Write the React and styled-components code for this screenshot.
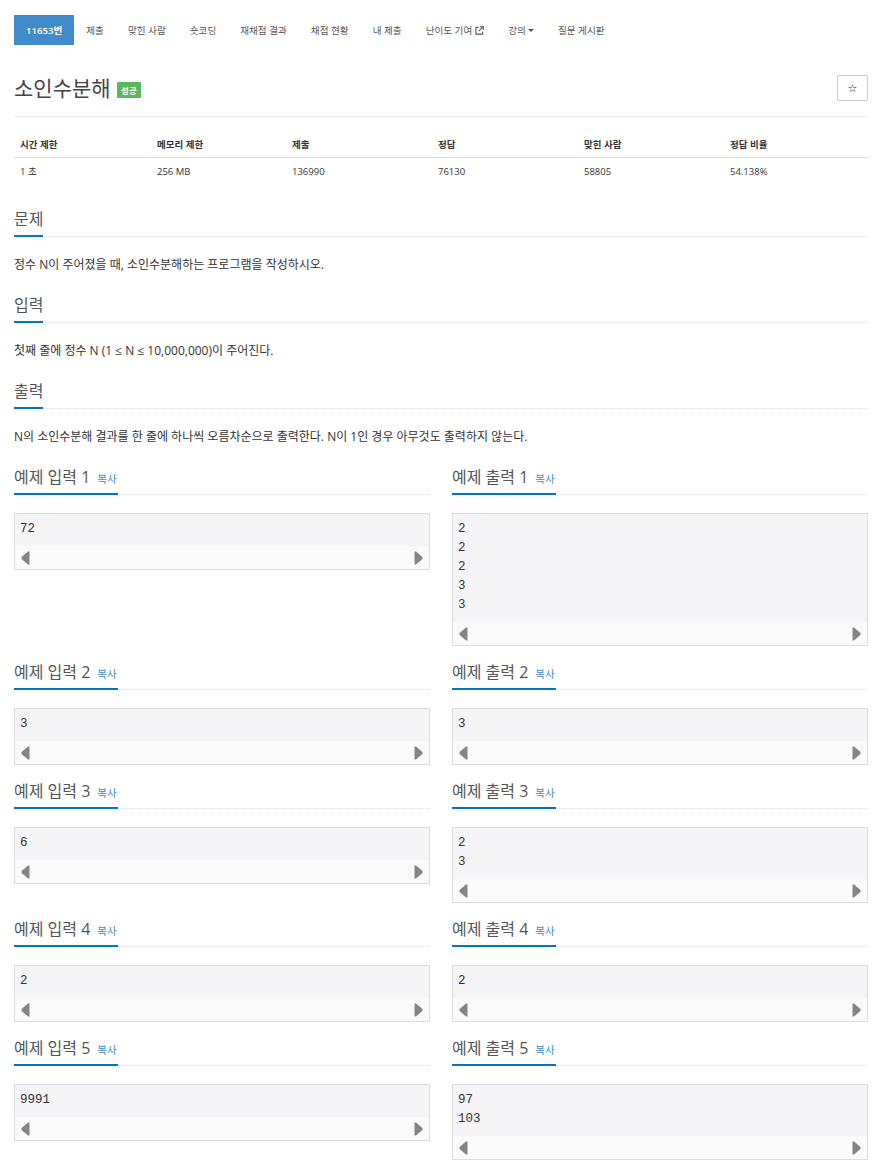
import React from 'react';
import styled, { createGlobalStyle } from 'styled-components';

const GlobalStyle = createGlobalStyle`
  body {
    margin: 0;
    background: #fff;
    color: #333;
    font-family: "Open Sans", "Noto Sans CJK KR", sans-serif;
  }
`

const Page = styled.div`
  width: 854px;
  padding: 15px 0 20px 14px;
`

const Nav = styled.ul`
  display: flex;
  margin: 0;
  padding: 0;
  list-style: none;
`

const NavItem = styled.li`
  display: flex;
  align-items: center;
  gap: 3px;
  height: 30px;
  padding: 0 12px;
  font-size: 9.6px;
  color: ${p => (p.active ? '#fff' : '#555')};
  background: ${p => (p.active ? '#428bca' : 'transparent')};
  font-weight: ${p => (p.active ? 600 : 400)};
`

const Caret = styled.span`
  display: inline-block;
  width: 0;
  height: 0;
  margin-left: -1px;
  border-top: 3.5px solid #555;
  border-left: 3px solid transparent;
  border-right: 3px solid transparent;
`

const TitleRow = styled.div`
  display: flex;
  align-items: center;
  height: 30px;
  margin-top: 28px;
  padding-bottom: 13px;
  border-bottom: 1px solid #eee;
`

const Title = styled.h1`
  margin: 0;
  font-size: 21px;
  font-weight: 400;
  color: #444;
  line-height: 30px;
`

const Badge = styled.span`
  display: inline-flex;
  align-items: center;
  height: 16px;
  padding: 0 4.5px;
  margin: 4px 0 0 6px;
  background: #5cb85c;
  color: #fff;
  font-size: 8.5px;
  font-weight: 700;
  border-radius: 1px;
`

const StarButton = styled.button`
  margin-left: auto;
  width: 31px;
  height: 26px;
  padding: 0;
  background: #fff;
  border: 1px solid #ccc;
  border-radius: 2px;
  font-size: 11px;
  color: #222;
  font-family: "DejaVu Sans", sans-serif;
`

const Table = styled.div`
  display: grid;
  grid-template-columns: 137px 135px 146px 146px 146px 1fr;
  margin-top: 14px;
  font-size: 9.5px;
`

const Th = styled.div`
  padding: 5.5px 6px;
  line-height: 15px;
  font-weight: 700;
  color: #333;
  border-bottom: 1.5px solid #ddd;
`

const Td = styled.div`
  padding: 5.5px 6px;
  line-height: 15px;
  color: #333;
`

const Headline = styled.div`
  display: flex;
  border-bottom: 1px dotted #ddd;
`

const HeadTitle = styled.h2`
  margin: 0 0 -1px;
  padding-bottom: 3px;
  font-size: 16px;
  font-weight: 400;
  line-height: 26px;
  color: #555;
  border-bottom: 2px solid #0076c0;
`

const Copy = styled.span`
  margin-left: 7px;
  padding-right: 1px;
  font-size: 10.5px;
  line-height: 1;
  color: #428bca;
`

const Section = styled.section`
  margin-top: 22px;
  & + & {
    margin-top: 18px;
  }
`

const Text = styled.p`
  margin: 19px 0 0;
  font-size: 12px;
  line-height: 18px;
  color: #333;
`

const SampleGrid = styled.div`
  display: grid;
  grid-template-columns: 416px 416px;
  column-gap: 22px;
  row-gap: 13px;
  margin-top: 18px;
  align-items: start;
`

const Sample = styled.div``

const Pre = styled.div`
  margin-top: 18px;
  border: 1px solid #dcdce2;
  background: #fafafa;
`

const Code = styled.pre`
  margin: 0;
  padding: 6px 5px 7px;
  background: #f5f5f7;
  font-family: "Liberation Mono", monospace;
  font-size: 12.5px;
  line-height: 19px;
  color: #333;
`

const ScrollBar = styled.div`
  display: flex;
  align-items: center;
  justify-content: space-between;
  height: 23px;
  padding: 0 6px;
`

const Arrow = ({ dir }) => (
  <svg width="9" height="14" viewBox="0 0 9 14">
    {dir === 'left'
      ? <path d="M8.5 0.5 L8.5 13.5 L7 13.5 L0.5 8 L0.5 6 L7 0.5 Z" fill="#858585" />
      : <path d="M0.5 0.5 L0.5 13.5 L2 13.5 L8.5 8 L8.5 6 L2 0.5 Z" fill="#858585" />}
  </svg>
)

const ExternalIcon = () => (
  <svg width="9" height="9" viewBox="0 0 10 10" fill="none" stroke="#555" strokeWidth="1.2">
    <path d="M4 1.5 H1 V9 H8.5 V6" />
    <path d="M5.5 0.8 H9.2 V4.5" />
    <path d="M9.2 0.8 L4.2 5.8" />
  </svg>
)

const navItems = ['제출', '맞힌 사람', '숏코딩', '재채점 결과', '채점 현황', '내 제출']

const stats = [
  ['시간 제한', '1 초'],
  ['메모리 제한', '256 MB'],
  ['제출', '136990'],
  ['정답', '76130'],
  ['맞힌 사람', '58805'],
  ['정답 비율', '54.138%'],
]

const samples = [
  ['72', '2\n2\n2\n3\n3'],
  ['3', '3'],
  ['6', '2\n3'],
  ['2', '2'],
  ['9991', '97\n103'],
]

const SampleBox = ({ title, data }) => (
  <Sample>
    <Headline>
      <HeadTitle>
        {title}
        <Copy>복사</Copy>
      </HeadTitle>
    </Headline>
    <Pre>
      <Code>{data}</Code>
      <ScrollBar>
        <Arrow dir="left" />
        <Arrow dir="right" />
      </ScrollBar>
    </Pre>
  </Sample>
)

export default function App() {
  return (
    <Page>
      <GlobalStyle />
      <Nav>
        <NavItem active>11653번</NavItem>
        {navItems.map(n => <NavItem key={n}>{n}</NavItem>)}
        <NavItem>난이도 기여 <ExternalIcon /></NavItem>
        <NavItem>강의<Caret /></NavItem>
        <NavItem>질문 게시판</NavItem>
      </Nav>

      <TitleRow>
        <Title>소인수분해</Title>
        <Badge>성공</Badge>
        <StarButton>☆</StarButton>
      </TitleRow>

      <Table>
        {stats.map(([h]) => <Th key={h}>{h}</Th>)}
        {stats.map(([h, v]) => <Td key={h}>{v}</Td>)}
      </Table>

      <Section>
        <Headline><HeadTitle>문제</HeadTitle></Headline>
        <Text>정수 N이 주어졌을 때, 소인수분해하는 프로그램을 작성하시오.</Text>
      </Section>
      <Section>
        <Headline><HeadTitle>입력</HeadTitle></Headline>
        <Text>첫째 줄에 정수 N (1 ≤ N ≤ 10,000,000)이 주어진다.</Text>
      </Section>
      <Section>
        <Headline><HeadTitle>출력</HeadTitle></Headline>
        <Text>N의 소인수분해 결과를 한 줄에 하나씩 오름차순으로 출력한다. N이 1인 경우 아무것도 출력하지 않는다.</Text>
      </Section>

      <SampleGrid>
        {samples.map(([input, output], i) => (
          <React.Fragment key={i}>
            <SampleBox title={`예제 입력 ${i + 1}`} data={input} />
            <SampleBox title={`예제 출력 ${i + 1}`} data={output} />
          </React.Fragment>
        ))}
      </SampleGrid>
    </Page>
  )
}
